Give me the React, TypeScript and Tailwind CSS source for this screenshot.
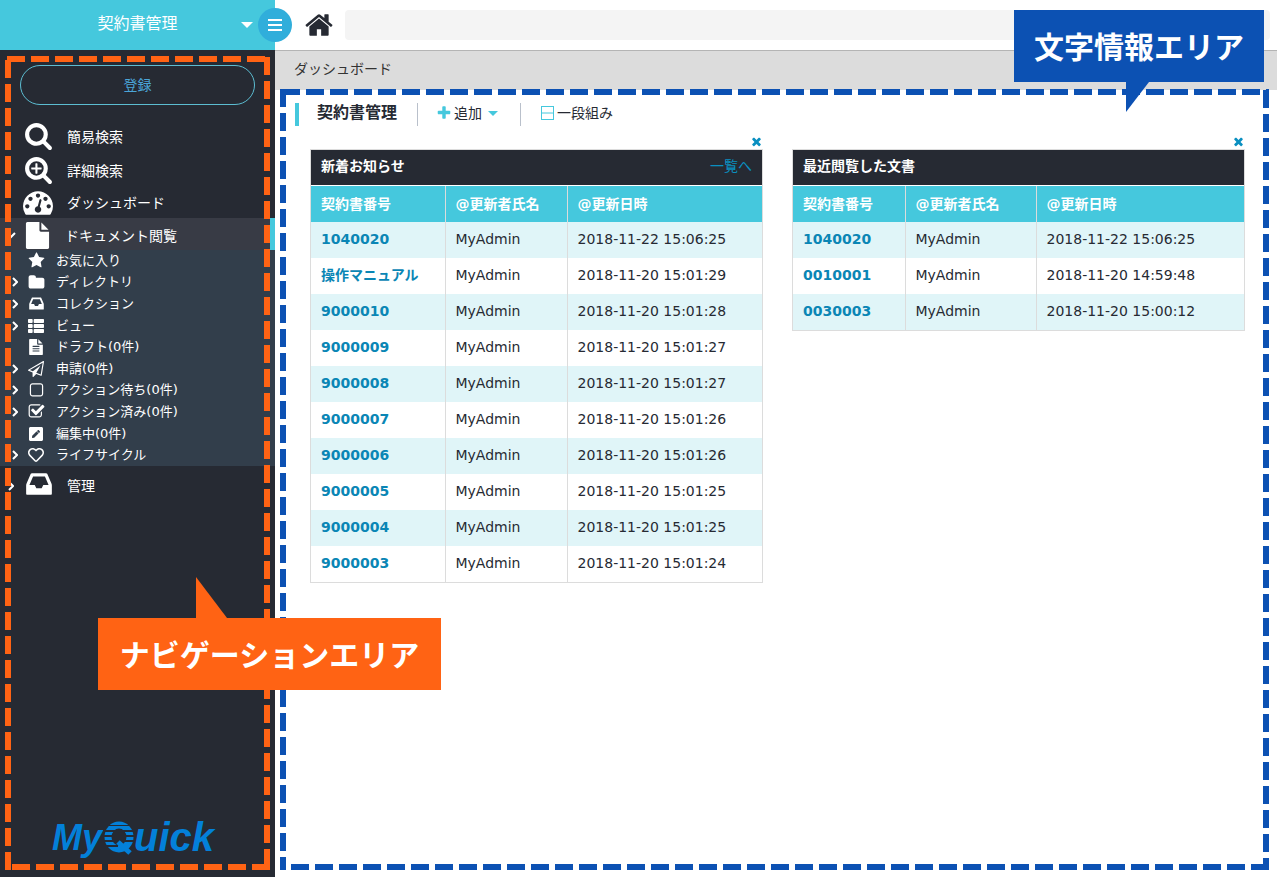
import React from 'react';
import { FaPenSquare, FaRegHeart, FaThList } from 'react-icons/fa';

const PATHS = {
  search:
    'M1216 832q0-185-131.5-316.5t-316.5-131.5-316.5 131.5-131.5 316.5 131.5 316.5 316.5 131.5 316.5-131.5 131.5-316.5zm512 832q0 52-38 90t-90 38q-54 0-90-38l-343-342q-179 124-399 124-143 0-273.5-55.5t-225-150-150-225-55.5-273.5 55.5-273.5 150-225 225-150 273.5-55.5 273.5 55.5 225 150 150 225 55.5 273.5q0 220-124 399l343 343q37 37 37 90z',
  searchPlus:
    'M1088 800v64q0 13-9.5 22.5t-22.5 9.5h-224v224q0 13-9.5 22.5t-22.5 9.5h-64q-13 0-22.5-9.5t-9.5-22.5v-224h-224q-13 0-22.5-9.5t-9.5-22.5v-64q0-13 9.5-22.5t22.5-9.5h224v-224q0-13 9.5-22.5t22.5-9.5h64q13 0 22.5 9.5t9.5 22.5v224h224q13 0 22.5 9.5t9.5 22.5zm128 32q0-185-131.5-316.5t-316.5-131.5-316.5 131.5-131.5 316.5 131.5 316.5 316.5 131.5 316.5-131.5 131.5-316.5zm512 832q0 53-37.5 90.5t-90.5 37.5q-54 0-90-38l-343-342q-179 124-399 124-143 0-273.5-55.5t-225-150-150-225-55.5-273.5 55.5-273.5 150-225 225-150 273.5-55.5 273.5 55.5 225 150 150 225 55.5 273.5q0 220-124 399l343 343q37 37 37 90z',
  gauge:
    'M384 1152q0-53-37.5-90.5t-90.5-37.5-90.5 37.5-37.5 90.5 37.5 90.5 90.5 37.5 90.5-37.5 37.5-90.5zm192-448q0-53-37.5-90.5t-90.5-37.5-90.5 37.5-37.5 90.5 37.5 90.5 90.5 37.5 90.5-37.5 37.5-90.5zm428 481l101-382q6-26-7.5-48.5t-38.5-29.5-48 6.5-30 39.5l-101 382q-60 5-107 43.5t-63 98.5q-20 77 20 146t117 89 146-20 89-117q16-60-6-117t-72-91zm660-33q0-53-37.5-90.5t-90.5-37.5-90.5 37.5-37.5 90.5 37.5 90.5 90.5 37.5 90.5-37.5 37.5-90.5zm-640-640q0-53-37.5-90.5t-90.5-37.5-90.5 37.5-37.5 90.5 37.5 90.5 90.5 37.5 90.5-37.5 37.5-90.5zm448 192q0-53-37.5-90.5t-90.5-37.5-90.5 37.5-37.5 90.5 37.5 90.5 90.5 37.5 90.5-37.5 37.5-90.5zm320 448q0 261-141 483-19 29-54 29h-1402q-35 0-54-29-141-221-141-483 0-182 71-348t191-286 286-191 348-71 348 71 286 191 191 286 71 348z',
  file: 'M1152 512v-472q22 14 36 28l408 408q14 14 28 36h-472zm-128 32q0 40 28 68t68 28h544v1056q0 40-28 68t-68 28h-1344q-40 0-68-28t-28-68v-1600q0-40 28-68t68-28h800v544z',
  fileText:
    'M1596 476q14 14 28 36h-472v-472q22 14 36 28zm-476 164h544v1056q0 40-28 68t-68 28h-1344q-40 0-68-28t-28-68v-1600q0-40 28-68t68-28h800v544q0 40 28 68t68 28zm160 736v-64q0-14-9-23t-23-9h-704q-14 0-23 9t-9 23v64q0 14 9 23t23 9h704q14 0 23-9t9-23zm0-256v-64q0-14-9-23t-23-9h-704q-14 0-23 9t-9 23v64q0 14 9 23t23 9h704q14 0 23-9t9-23zm0-256v-64q0-14-9-23t-23-9h-704q-14 0-23 9t-9 23v64q0 14 9 23t23 9h704q14 0 23-9t9-23z',
  star: 'M1728 647q0 22-26 48l-363 354 86 500q1 7 1 20 0 21-10.5 35.5t-30.5 14.5q-19 0-40-12l-449-236-449 236q-22 12-40 12-21 0-31.5-14.5t-10.5-35.5q0-6 2-20l86-500-364-354q-25-27-25-48 0-37 56-46l502-73 225-455q19-41 49-41t49 41l225 455 502 73q56 9 56 46z',
  folder:
    'M1728 608v704q0 92-66 158t-158 66h-1216q-92 0-158-66t-66-158v-960q0-92 66-158t158-66h320q92 0 158 66t66 158v32h672q92 0 158 66t66 158z',
  inbox:
    'M1151 960h316q-1-3-2.5-8.5t-2.5-7.5l-212-496h-708l-212 496q-1 3-2.5 8.5t-2.5 7.5h316l95 192h320zm513 30v482q0 26-19 45t-45 19h-1408q-26 0-45-19t-19-45v-482q0-62 25-123l238-552q10-25 36.5-42t52.5-17h832q26 0 52.5 17t36.5 42l238 552q25 61 25 123z',
  plane:
    'M1764 11q33 24 27 64l-256 1536q-5 29-32 45-14 8-31 8-11 0-24-5l-527-215-298 327q-18 21-47 21-14 0-23-4-19-7-30-23.5t-11-36.5v-452l-472-193q-37-14-40-55-3-39 32-59l1664-960q35-21 68 2zm-342 1499l221-1323-1434 827 336 137 863-639-478 797z',
  square:
    'M1312 256h-832q-66 0-113 47t-47 113v832q0 66 47 113t113 47h832q66 0 113-47t47-113v-832q0-66-47-113t-113-47zm288 160v832q0 119-84.5 203.5t-203.5 84.5h-832q-119 0-203.5-84.5t-84.5-203.5v-832q0-119 84.5-203.5t203.5-84.5h832q119 0 203.5 84.5t84.5 203.5z',
  checkSquare:
    'M1472 930v318q0 119-84.5 203.5t-203.5 84.5h-832q-119 0-203.5-84.5t-84.5-203.5v-832q0-119 84.5-203.5t203.5-84.5h832q63 0 117 25 15 7 18 23 3 17-9 29l-49 49q-10 10-23 10-3 0-9-2-23-6-45-6h-832q-66 0-113 47t-47 113v832q0 66 47 113t113 47h832q66 0 113-47t47-113v-254q0-13 9-22l64-64q10-10 23-10 6 0 12 3 20 8 20 29zm231-489l-814 814q-24 24-57 24t-57-24l-430-430q-24-24-24-57t24-57l110-110q24-24 57-24t57 24l263 263 647-647q24-24 57-24t57 24l110 110q24 24 24 57t-24 57z',
  home: 'M1472 992v480q0 26-19 45t-45 19h-384v-384h-256v384h-384q-26 0-45-19t-19-45v-480q0-1 .5-3t.5-3l575-474 575 474q1 2 1 6zm223-69l-62 74q-8 9-21 11h-3q-13 0-21-7l-692-577-692 577q-12 8-24 7-13-2-21-11l-62-74q-8-10-7-23.5t11-21.5l719-599q32-26 76-26t76 26l244 204v-195q0-14 9-23t23-9h192q14 0 23 9t9 23v408l219 182q10 8 11 21.5t-7 23.5z',
  plus: 'M1600 736v192q0 40-28 68t-68 28h-416v416q0 40-28 68t-68 28h-192q-40 0-68-28t-28-68v-416h-416q-40 0-68-28t-28-68v-192q0-40 28-68t68-28h416v-416q0-40 28-68t68-28h192q40 0 68 28t28 68v416h416q40 0 68 28t28 68z',
  times:
    'M1490 1322q0 40-28 68l-136 136q-28 28-68 28t-68-28l-294-294-294 294q-28 28-68 28t-68-28l-136-136q-28-28-28-68t28-68l294-294-294-294q-28-28-28-68t28-68l136-136q28-28 68-28t68 28l294 294 294-294q28-28 68-28t68 28l136 136q28 28 28 68t-28 68l-294 294 294 294q28 28 28 68z',
};

function Icon({ name, size }: { name: keyof typeof PATHS; size: number }) {
  return (
    <svg width={size} height={size} viewBox="0 0 1792 1792" fill="currentColor" className="shrink-0" aria-hidden="true">
      <path d={PATHS[name]} />
    </svg>
  );
}

function Caret({ width = 12 }: { width?: number }) {
  return (
    <svg width={width} height={width / 2} viewBox="0 0 12 6" fill="currentColor" aria-hidden="true">
      <path d="M0 0h12L6 6z" />
    </svg>
  );
}

function Chevron({ open = false }: { open?: boolean }) {
  return (
    <svg width="6" height="10" viewBox="0 0 6 10" fill="none" stroke="currentColor" strokeWidth="2" className="shrink-0" aria-hidden="true">
      <path d={open ? 'M-3 3l3 4 5-5' : 'M1 1l4 4-4 4'} />
    </svg>
  );
}

const mainItems = [
  { label: '簡易検索', icon: <Icon name="search" size={29} />, height: 'h-[34px]' },
  { label: '詳細検索', icon: <Icon name="searchPlus" size={29} />, height: 'h-[34px]' },
  { label: 'ダッシュボード', icon: <Icon name="gauge" size={30} />, height: 'h-[30px]' },
];

const subItems = [
  { label: 'お気に入り', icon: <Icon name="star" size={17} />, arrow: false },
  { label: 'ディレクトリ', icon: <Icon name="folder" size={17} />, arrow: true },
  { label: 'コレクション', icon: <Icon name="inbox" size={17} />, arrow: true },
  { label: 'ビュー', icon: <FaThList size={16} />, arrow: true },
  { label: 'ドラフト(0件)', icon: <Icon name="fileText" size={16} />, arrow: false },
  { label: '申請(0件)', icon: <Icon name="plane" size={16} />, arrow: true },
  { label: 'アクション待ち(0件)', icon: <Icon name="square" size={17} />, arrow: true },
  { label: 'アクション済み(0件)', icon: <Icon name="checkSquare" size={17} />, arrow: true },
  { label: '編集中(0件)', icon: <FaPenSquare size={16} />, arrow: false },
  { label: 'ライフサイクル', icon: <FaRegHeart size={16} />, arrow: true },
];

const news = [
  ['1040020', 'MyAdmin', '2018-11-22 15:06:25'],
  ['操作マニュアル', 'MyAdmin', '2018-11-20 15:01:29'],
  ['9000010', 'MyAdmin', '2018-11-20 15:01:28'],
  ['9000009', 'MyAdmin', '2018-11-20 15:01:27'],
  ['9000008', 'MyAdmin', '2018-11-20 15:01:27'],
  ['9000007', 'MyAdmin', '2018-11-20 15:01:26'],
  ['9000006', 'MyAdmin', '2018-11-20 15:01:26'],
  ['9000005', 'MyAdmin', '2018-11-20 15:01:25'],
  ['9000004', 'MyAdmin', '2018-11-20 15:01:25'],
  ['9000003', 'MyAdmin', '2018-11-20 15:01:24'],
];

const recent = [
  ['1040020', 'MyAdmin', '2018-11-22 15:06:25'],
  ['0010001', 'MyAdmin', '2018-11-20 14:59:48'],
  ['0030003', 'MyAdmin', '2018-11-20 15:00:12'],
];

function Logo() {
  return (
    <svg width="180" height="46" viewBox="0 0 180 46" fill="#0380d9" className="overflow-visible" role="img" aria-label="MyQuick">
      <g fontFamily="'Liberation Sans', Arial, sans-serif" fontWeight="bold" fontStyle="italic">
        <text x="1" y="33" fontSize="36">My</text>
        <text x="83" y="34" fontSize="40">uick</text>
      </g>
      {/* striped Q */}
      <g fill="none" stroke="#0380d9" strokeWidth="7">
        <ellipse cx="68" cy="20" rx="11" ry="12" />
        <path d="M67 25l12 11" strokeWidth="5" />
      </g>
      <g fill="#262a33">
        <rect x="52" y="8" width="32" height="1" />
        <rect x="52" y="13" width="32" height="2" />
        <rect x="52" y="18" width="32" height="2" />
        <rect x="52" y="23" width="13" height="2" />
        <rect x="74" y="23" width="10" height="2" />
        <rect x="52" y="28" width="15" height="2" />
      </g>
    </svg>
  );
}

function Panel({ title, rows, cols, more }: { title: string; rows: string[][]; cols: string[]; more?: boolean }) {
  return (
    <section>
      <div className="flex h-[14px] items-start justify-end">
        <button aria-label="閉じる" className="text-[#0a8fc0]">
          <Icon name="times" size={13} />
        </button>
      </div>
      <div className="border border-[#dcdcdc]">
        <div className="flex h-9 items-center justify-between border-b border-white bg-[#262a33] px-[10px] pb-[3px]">
          <h2 className="font-bold text-white">{title}</h2>
          {more && <a href="#" className="text-[#0a8fc0]">一覧へ</a>}
        </div>
        <table className="w-full table-fixed border-collapse text-left">
          <thead>
            <tr className="h-9 bg-[#45c8dd] text-white">
              <th className={`${cols[0]} border-r border-[#dcdcdc] pl-[10px]`}>契約書番号</th>
              <th className={`${cols[1]} border-r border-[#dcdcdc] pl-[10px]`}>@更新者氏名</th>
              <th className="pl-[10px]">@更新日時</th>
            </tr>
          </thead>
          <tbody>
            {rows.map(([id, user, date]) => (
              <tr key={id} className="h-9 odd:bg-[#e0f5f8]">
                <td className="border-r border-[#dcdcdc] pb-[2px] pl-[10px]">
                  <a href="#" className="font-bold text-[#0a86b5]">{id}</a>
                </td>
                <td className="border-r border-[#dcdcdc] pb-[2px] pl-[10px]">{user}</td>
                <td className="pb-[2px] pl-[10px] whitespace-nowrap">{date}</td>
              </tr>
            ))}
          </tbody>
        </table>
      </div>
    </section>
  );
}

/* Dashed outline that marks an area of the screen */
function Frame({ className, left }: { className: string; left: 'up' | 'down' }) {
  return (
    <div className={`pointer-events-none absolute ${className}`}>
      <svg width="100%" height="100%" stroke="currentColor" strokeWidth="6" strokeDasharray="18 6" className="block overflow-visible">
        <line x1="2" y1="3" x2="100%" y2="3" />
        <svg x="100%" className="overflow-visible">
          <line x1="-3" y1="1" x2="-3" y2="100%" />
        </svg>
        <svg y="100%" className="overflow-visible">
          <line x1="100%" y1="-3" x2="0" y2="-3" />
        </svg>
        <line x1="3" y1={left === 'up' ? '100%' : '0'} x2="3" y2={left === 'up' ? '4' : '100%'} />
      </svg>
    </div>
  );
}

function Sidebar() {
  return (
    <aside className="relative flex w-[275px] shrink-0 flex-col bg-[#262a33] text-white">
      <button className="flex h-[50px] items-center bg-[#45c8dd] pr-[22px] pl-[34px] text-base">
        <span className="flex-1 pb-[2px] text-center">契約書管理</span>
        <Caret />
      </button>
      <button className="mx-5 mt-[15px] h-10 rounded-full border border-[#5cbdd2] text-[#4ba5d8]">登録</button>

      <nav className="mt-[15px]">
        {mainItems.map(item => (
          <a key={item.label} href="#" className={`flex items-center pl-[23px] ${item.height}`}>
            <span className="flex w-[30px] justify-center pb-[3px]">{item.icon}</span>
            <span className="ml-[14px]">{item.label}</span>
          </a>
        ))}
        <a href="#" className="flex h-8 items-center border-r-[5px] border-[#45c8dd] bg-[#383b45] pt-[3px] pl-[10px]">
          <Chevron open />
          <span className="ml-[6px] flex w-[30px] justify-center"><Icon name="file" size={27} /></span>
          <span className="ml-[13px]">ドキュメント閲覧</span>
        </a>
        <ul className="flex h-[216px] flex-col bg-[#323e4b] text-[13px]">
          {subItems.map(item => (
            <li key={item.label} className="flex-1">
              <a href="#" className="flex h-full items-center pl-3">
                <span className="flex w-[6px]">{item.arrow && <Chevron />}</span>
                <span className="ml-[9px] flex w-[18px] justify-center">{item.icon}</span>
                <span className="ml-[11px]">{item.label}</span>
              </a>
            </li>
          ))}
        </ul>
        <a href="#" className="flex h-10 items-center pl-2">
          <Chevron />
          <span className="ml-[10px] flex w-[30px] justify-center pb-1"><Icon name="inbox" size={30} /></span>
          <span className="ml-[13px]">管理</span>
        </a>
      </nav>

      <div className="mt-auto pb-[14px] pl-[51px]">
        <Logo />
      </div>
      <Frame className="top-[56px] right-[5px] bottom-[7px] left-[5px] text-[#ff6314]" left="up" />
    </aside>
  );
}

export default function App() {
  return (
    <div className="relative flex min-h-screen bg-white font-['DejaVu_Sans','Noto_Sans_CJK_JP',sans-serif] text-[14px] leading-5 text-[#262a33]">
      <Sidebar />

      <main className="relative min-w-0 flex-1">
        <header className="flex h-[51px] items-center border-b border-[#b4b4b4] pr-[7px] pl-[29px]">
          <button aria-label="メニュー" className="absolute top-2 -left-[17px] flex h-[34px] w-[34px] flex-col items-center justify-center gap-[3px] rounded-full bg-[#30aedb]">
            <span className="h-[2px] w-[14px] bg-white" />
            <span className="h-[2px] w-[14px] bg-white" />
            <span className="h-[2px] w-[14px] bg-white" />
          </button>
          <a href="#" aria-label="ホーム"><Icon name="home" size={30} /></a>
          <input type="text" aria-label="検索" className="ml-[11px] h-[30px] min-w-0 flex-1 rounded bg-[#f4f4f4] px-3" />
        </header>
        <div className="flex h-[39px] items-center bg-[#dcdcdc] pb-[3px] pl-[19px] text-[#333]">ダッシュボード</div>

        <div className="mt-[13px] ml-5 flex h-[23px] items-center">
          <span className="h-full w-1 bg-[#45c8dd]" />
          <h1 className="ml-[18px] pb-[3px] text-base font-bold">契約書管理</h1>
          <span className="ml-5 h-full w-px bg-[#b9c0cb]" />
          <button className="ml-[18px] flex items-center pb-[3px]">
            <span className="text-[#45c8dd]"><Icon name="plus" size={16} /></span>
            <span className="ml-[2px]">追加</span>
            <span className="mr-[2px] ml-[6px] text-[#45c8dd]"><Caret width={10} /></span>
          </button>
          <span className="ml-5 h-full w-px bg-[#b9c0cb]" />
          <button className="ml-[19px] flex items-center pb-[3px]">
            <svg width="15" height="16" viewBox="0 0 15 16" fill="none" stroke="#45c8dd" aria-hidden="true">
              <path d="M1.5 1v14M13.5 1v14M1 1.5h13M1 8h13M1 14.5h13" />
            </svg>
            <span className="ml-[2px]">一段組み</span>
          </button>
        </div>

        <div className="mt-[9px] grid grid-cols-2 gap-[29px] pr-8 pl-[35px]">
          <Panel title="新着お知らせ" rows={news} cols={['w-[134px]', 'w-[122px]']} more />
          <Panel title="最近閲覧した文書" rows={recent} cols={['w-[112px]', 'w-[131px]']} />
        </div>
        <Frame className="top-[89px] right-2 bottom-[7px] left-[5px] text-[#0c51b3]" left="down" />
      </main>

      <div className="absolute top-[10px] right-[13px] flex h-[72px] w-[250px] items-center justify-center bg-[#0c51b3] pb-[3px] font-['Noto_Sans_CJK_JP',sans-serif] text-[30px] font-bold text-white">
        文字情報エリア
        <svg width="23" height="30" viewBox="0 0 23 30" fill="#0c51b3" className="absolute top-full left-[112px]" aria-hidden="true">
          <path d="M0 0h23L0 30z" />
        </svg>
      </div>
      <div className="absolute top-[618px] left-[98px] flex h-[72px] w-[343px] items-center justify-center bg-[#ff6314] pb-[2px] font-['Noto_Sans_CJK_JP',sans-serif] text-[30px] font-bold text-white">
        ナビゲーションエリア
        <svg width="31" height="41" viewBox="0 0 31 41" fill="#ff6314" className="absolute bottom-full left-[98px]" aria-hidden="true">
          <path d="M0 0v41h31z" />
        </svg>
      </div>
    </div>
  );
}
